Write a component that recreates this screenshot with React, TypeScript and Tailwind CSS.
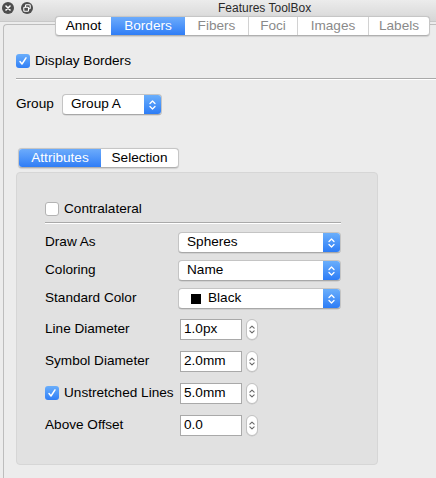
import React from "react";

const font = { fontFamily: '"Liberation Sans", Arial, sans-serif' };

function Chevrons({ color = "white", w = 7, h = 12 }: { color?: string; w?: number; h?: number }) {
  return (
    <svg width={w} height={h} viewBox="0 0 7 12" fill="none" stroke={color} strokeWidth="1.3" strokeLinecap="round" strokeLinejoin="round">
      <path d="M1 4.5 L3.5 2 L6 4.5" />
      <path d="M1 7.5 L3.5 10 L6 7.5" />
    </svg>
  );
}

function Select({ width, children, className = "" }: { width: number; children: React.ReactNode; className?: string }) {
  return (
    <div
      className={`flex h-[21px] rounded-[4px] bg-white border border-[#c4c4c4] border-b-[#a8a8a8] shadow-[0_0.5px_0.5px_rgba(0,0,0,0.15)] overflow-hidden ${className}`}
      style={{ width }}
    >
      <div className="flex-1 flex items-center pl-[8px] text-[13.6px] text-black">{children}</div>
      <div className="w-[17px] flex items-center justify-center bg-gradient-to-b from-[#6aaefb] to-[#2c7cf6]">
        <Chevrons />
      </div>
    </div>
  );
}

function Stepper() {
  return (
    <div className="w-[12px] h-[21px] rounded-full border border-[#c2c2c2] bg-white flex items-center justify-center shadow-[0_0.5px_0.5px_rgba(0,0,0,0.12)]">
      <Chevrons color="#6a6a6a" w={6} h={13} />
    </div>
  );
}

function NumField({ value }: { value: string }) {
  return (
    <div className="flex items-center gap-[4px]">
      <div className="w-[62px] h-[21px] bg-white border border-[#a9a9a9] flex items-center pl-[3px] text-[13.6px] text-black">{value}</div>
      <Stepper />
    </div>
  );
}

function Check({ checked }: { checked: boolean }) {
  if (checked) {
    return (
      <div className="w-[14px] h-[14px] rounded-[3px] bg-gradient-to-b from-[#6aaefb] to-[#2f7ef6] flex items-center justify-center shrink-0">
        <svg width="10" height="10" viewBox="0 0 10 10" fill="none" stroke="white" strokeWidth="1.5" strokeLinecap="round" strokeLinejoin="round">
          <path d="M2 5.5 L4 8 L8 1.8" />
        </svg>
      </div>
    );
  }
  return <div className="w-[14px] h-[14px] rounded-[3px] bg-white border border-[#b3b3b3] shrink-0" />;
}

function Separator({ className = "" }: { className?: string }) {
  return (
    <div className={className}>
      <div className="h-px bg-[#a9a9a9]" />
      <div className="h-px bg-white" />
    </div>
  );
}

const tabs = [
  { label: "Annot", w: 56, state: "normal" },
  { label: "Borders", w: 74, state: "sel" },
  { label: "Fibers", w: 63, state: "dim" },
  { label: "Foci", w: 49, state: "dim" },
  { label: "Images", w: 71, state: "dim" },
  { label: "Labels", w: 61, state: "dim" },
];

export default function App() {
  return (
    <div className="relative w-[436px] h-[478px] bg-[#ececec] overflow-hidden text-black text-[13.6px]" style={font}>
      {/* title bar */}
      <div className="h-[22px] bg-gradient-to-b from-[#ececec] to-[#d6d6d6] border-b border-[#c8c8c8] flex items-start">
        <div className="flex gap-[7px] pl-[2px] pt-[2px]">
          <div className="w-[12px] h-[12px] rounded-full bg-[#4e4e4e] flex items-center justify-center">
            <svg width="6" height="6" viewBox="0 0 6 6" stroke="white" strokeWidth="1.6" strokeLinecap="round">
              <path d="M1 1 L5 5 M5 1 L1 5" />
            </svg>
          </div>
          <div className="w-[12px] h-[12px] rounded-full bg-[#4e4e4e] flex items-center justify-center">
            <svg width="8" height="8" viewBox="0 0 8 8" fill="none" stroke="white" strokeWidth="1.1">
              <rect x="2.5" y="0.8" width="4.7" height="4" rx="0.8" />
              <rect x="0.8" y="3.2" width="4.7" height="4" rx="0.8" fill="#4e4e4e" />
            </svg>
          </div>
        </div>
        <div className="ml-[185px] pt-[2px] text-[12px] leading-[13px] text-[#2a2a2a]">Features ToolBox</div>
      </div>

      {/* top tabs (overlay on tab view border) */}
      <div className="absolute left-[55px] top-[16px] flex h-[20px] rounded-[4px] bg-white border border-[#c6c6c6] border-b-[#b0b0b0] shadow-[0_0.5px_1px_rgba(0,0,0,0.12)] overflow-hidden z-10">
        {tabs.map((t, i) => (
          <div
            key={t.label}
            className={`flex items-center justify-center text-[13.6px] ${
              t.state === "sel"
                ? "bg-gradient-to-b from-[#6cabfb] to-[#2f7df6] text-white"
                : t.state === "dim"
                ? "text-[#8a8a8a]"
                : "text-black"
            } ${i > 0 && tabs[i - 1].state !== "sel" && t.state !== "sel" ? "border-l border-[#d2d2d2]" : ""}`}
            style={{ width: t.w - (i === 0 ? 1 : 0) }}
          >
            {t.label}
          </div>
        ))}
      </div>

      {/* tab view box */}
      <div className="ml-[3px] mt-[2px] h-[454px] border-l border-t border-[#bdbdbd] rounded-tl-[4px] flex flex-col">
        <div className="mt-[28px] ml-[12px] flex items-center gap-[5px] h-[16px]">
          <Check checked />
          <span>Display Borders</span>
        </div>
        <Separator className="mt-[9px] ml-[12px]" />
        <div className="mt-[14px] ml-[12px] flex items-center">
          <span className="w-[46px]">Group</span>
          <Select width={100}>Group A</Select>
        </div>

        {/* inner tabs */}
        <div className="mt-[33px] ml-[14px] flex h-[20px] w-[161px] rounded-[4px] bg-white border border-[#c6c6c6] border-b-[#b0b0b0] overflow-hidden shadow-[0_0.5px_1px_rgba(0,0,0,0.12)]">
          <div className="w-[82px] flex items-center justify-center text-white bg-gradient-to-b from-[#6cabfb] to-[#2f7df6]">Attributes</div>
          <div className="flex-1 flex items-center justify-center">Selection</div>
        </div>

        {/* inner box */}
        <div className="mt-[4px] ml-[12px] w-[362px] h-[293px] bg-[#e1e1e1] border border-[#d6d6d6] rounded-[4px] pl-[28px] flex flex-col">
          <div className="mt-[28px] flex items-center gap-[5px] h-[16px]">
            <Check checked={false} />
            <span>Contralateral</span>
          </div>
          <Separator className="mt-[5px] w-[296px]" />

          <div className="mt-[8px] flex items-center h-[21px]">
            <span className="w-[133px]">Draw As</span>
            <Select width={163}>Spheres</Select>
          </div>
          <div className="mt-[7px] flex items-center h-[21px]">
            <span className="w-[133px]">Coloring</span>
            <Select width={163}>Name</Select>
          </div>
          <div className="mt-[7px] flex items-center h-[21px]">
            <span className="w-[133px]">Standard Color</span>
            <Select width={163}>
              <span className="w-[10px] h-[10px] bg-black ml-[4px] mr-[7px]" />
              Black
            </Select>
          </div>

          <div className="mt-[10px] flex items-center h-[21px]">
            <span className="w-[135px]">Line Diameter</span>
            <NumField value="1.0px" />
          </div>
          <div className="mt-[11px] flex items-center h-[21px]">
            <span className="w-[135px]">Symbol Diameter</span>
            <NumField value="2.0mm" />
          </div>
          <div className="mt-[11px] flex items-center h-[21px]">
            <div className="w-[135px] flex items-center gap-[5px]">
              <Check checked />
              <span className="whitespace-nowrap">Unstretched Lines</span>
            </div>
            <NumField value="5.0mm" />
          </div>
          <div className="mt-[11px] flex items-center h-[21px]">
            <span className="w-[135px]">Above Offset</span>
            <NumField value="0.0" />
          </div>
        </div>
      </div>
    </div>
  );
}
